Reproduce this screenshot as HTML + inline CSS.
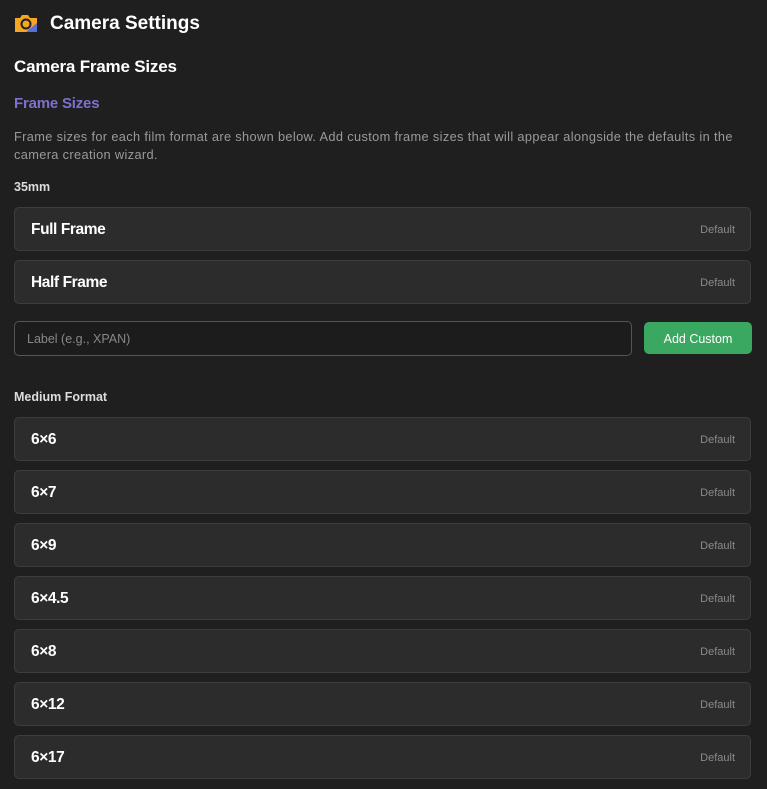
<!DOCTYPE html><html><head><style>
body{margin:0;background:#1f1f1f;width:767px;height:789px;overflow:hidden;font-family:"Liberation Sans",sans-serif;color:#fff;position:relative}
.a{position:absolute;white-space:nowrap}
.card{position:absolute;left:14px;width:735px;height:42px;background:#2c2c2c;border:1px solid #3d3d3d;border-radius:5px}
.card b{position:absolute;left:16px;top:13px;font-size:15.5px;letter-spacing:-0.4px}
.card i{position:absolute;right:15px;top:16px;font-style:normal;font-size:11px;color:#8a8a8a}
</style></head><body>
<svg class="a" style="left:14px;top:13px" width="24" height="20" viewBox="0 0 24 20"><path d="M1 5h5l2-3h6l2 3h7v14H1z" fill="#f5a623"/><path d="M23 10v9H12z" fill="#5a6ee0"/><circle cx="12" cy="11" r="4.5" fill="none" stroke="#222" stroke-width="2"/><rect x="3" y="3" width="3" height="2" fill="#222"/></svg>
<div class="a" style="left:50px;top:13px;font-size:19px;font-weight:bold">Camera Settings</div>
<div class="a" style="left:14px;top:57px;font-size:17px;font-weight:bold;letter-spacing:-0.2px">Camera Frame Sizes</div>
<div class="a" style="left:14px;top:95px;font-size:15px;font-weight:bold;color:#7c71cf;letter-spacing:-0.2px">Frame Sizes</div>
<div class="a" style="left:14px;top:128px;font-size:12.8px;color:#9a9a9a;line-height:18px;letter-spacing:0.35px">Frame sizes for each film format are shown below. Add custom frame sizes that will appear alongside the defaults in the<br>camera creation wizard.</div>
<div class="a" style="left:14px;top:180px;font-size:12.5px;font-weight:bold;color:#ddd">35mm</div>
<div class="card" style="top:207px"><b>Full Frame</b><i>Default</i></div>
<div class="card" style="top:260px"><b>Half Frame</b><i>Default</i></div>
<div class="a" style="left:14px;top:321px;width:616px;height:33px;border:1px solid #555;border-radius:5px;background:#1c1c1c"><span style="position:absolute;left:12px;top:10px;font-size:12.5px;color:#888">Label (e.g., XPAN)</span></div>
<div class="a" style="left:644px;top:322px;width:108px;height:32px;background:#3aa860;border-radius:5px;font-size:12.5px;text-align:center;line-height:34px">Add Custom</div>
<div class="a" style="left:14px;top:390px;font-size:12.5px;font-weight:bold;color:#ddd">Medium Format</div>
<div class="card" style="top:417px"><b>6×6</b><i>Default</i></div>
<div class="card" style="top:470px"><b>6×7</b><i>Default</i></div>
<div class="card" style="top:523px"><b>6×9</b><i>Default</i></div>
<div class="card" style="top:576px"><b>6×4.5</b><i>Default</i></div>
<div class="card" style="top:629px"><b>6×8</b><i>Default</i></div>
<div class="card" style="top:682px"><b>6×12</b><i>Default</i></div>
<div class="card" style="top:735px"><b>6×17</b><i>Default</i></div>
</body></html>
